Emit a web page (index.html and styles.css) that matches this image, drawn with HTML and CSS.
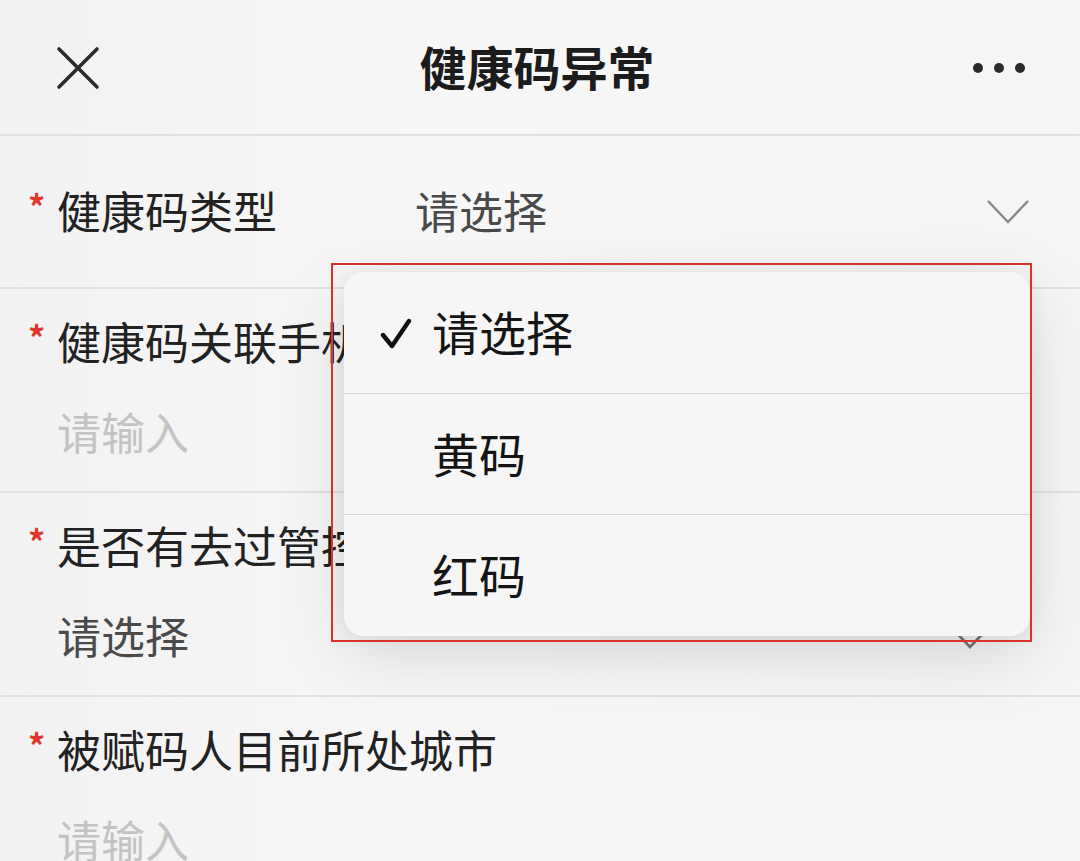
FILE: index.html
```html
<!DOCTYPE html>
<html lang="zh">
<head>
<meta charset="utf-8">
<link rel="stylesheet" href="styles.css">
</head>
<body>
<div class="page">
  <header class="topbar">
    <svg class="close" width="44" height="44" viewBox="0 0 44 44"><path d="M3 3 L41 41 M41 3 L3 41" stroke="#2b2b2b" stroke-width="3.6" stroke-linecap="round"/></svg>
    <div class="title">健康码异常</div>
    <svg class="more" width="54" height="14" viewBox="0 0 54 14"><circle cx="6" cy="7" r="5" fill="#2b2b2b"/><circle cx="27" cy="7" r="5" fill="#2b2b2b"/><circle cx="48" cy="7" r="5" fill="#2b2b2b"/></svg>
  </header>

  <section class="row row-inline">
    <div class="label"><span class="req">*</span>健康码类型</div>
    <div class="value select">请选择</div>
    <svg class="chev" width="44" height="26" viewBox="0 0 44 26"><path d="M2 2 L22 23 L42 2" fill="none" stroke="#888" stroke-width="2.4"/></svg>
  </section>

  <section class="row row-stack">
    <div class="label"><span class="req">*</span>健康码关联手机号</div>
    <div class="value placeholder">请输入</div>
  </section>

  <section class="row row-stack">
    <div class="label"><span class="req">*</span>是否有去过管控区域</div>
    <div class="value-line">
      <div class="value select">请选择</div>
      <svg class="chev" width="44" height="26" viewBox="0 0 44 26"><path d="M2 2 L22 23 L42 2" fill="none" stroke="#777" stroke-width="2.6"/></svg>
    </div>
  </section>

  <section class="row row-stack last">
    <div class="label"><span class="req">*</span>被赋码人目前所处城市</div>
    <div class="value placeholder">请输入</div>
  </section>

  <div class="highlight"></div>
  <div class="menu">
    <div class="item">
      <svg class="check" width="32" height="32" viewBox="0 0 32 32"><path d="M3 17 L12 28 L29 3" fill="none" stroke="#111" stroke-width="4.4" stroke-linejoin="round" stroke-linecap="round"/></svg>
      <span>请选择</span>
    </div>
    <div class="item"><span>黄码</span></div>
    <div class="item"><span>红码</span></div>
  </div>
</div>
</body>
</html>
```

FILE: styles.css
```css
* { box-sizing: border-box; }
html, body {
  margin: 0;
  padding: 0;
  width: 1080px;
  height: 861px;
  overflow: hidden;
  background: #f4f4f4;
  font-family: "Noto Sans CJK SC", "Noto Sans", sans-serif;
  color: #1f1f1f;
}
.page {
  position: relative;
  width: 1080px;
  height: 861px;
  overflow: hidden;
  background: linear-gradient(90deg, #f2f2f2 0%, #f7f7f7 40%, #f5f5f5 100%);
}
.topbar {
  height: 136px;
  display: flex;
  align-items: center;
  justify-content: space-between;
  padding: 6px 54px 0 56px;
  border-bottom: 2px solid #e0e0e0;
}
.close { display: block; margin-top: -4px; }
.title {
  font-size: 47px;
  font-weight: 700;
  color: #1c1c1c;
  margin-left: 2px;
  margin-top: -10px;
}
.more { display: block; margin-top: -4px; }

.row {
  border-bottom: 2px solid #e2e2e2;
  padding-left: 28px;
  padding-right: 50px;
}
.row.last { border-bottom: none; }
.row-inline {
  height: 153px;
  display: flex;
  align-items: center;
}
.row-inline .label { width: 387px; margin-top: -4px; }
.row-inline .value { flex: 1; margin-top: -4px; }

.row-stack {
  display: flex;
  flex-direction: column;
  padding-top: 24px;
  padding-bottom: 32px;
  gap: 34px;
}
.label {
  font-size: 44px;
  line-height: 56px;
  height: 56px;
  display: flex;
  align-items: flex-start;
  color: #222;
  white-space: nowrap;
}
.req {
  color: #e0362c;
  font-size: 34px;
  width: 29px;
  line-height: 40px;
  margin-top: 4px;
  font-weight: 700;
}
.value {
  font-size: 44px;
  line-height: 56px;
  height: 56px;
}
.row-stack .value { padding-left: 29px; }
.select { color: #4a4a4a; }
.placeholder { color: #c3c3c3; }
.value-line {
  display: flex;
  align-items: center;
  justify-content: space-between;
  padding-right: 38px;
}
.value-line .chev { margin-top: 4px; }

.highlight {
  position: absolute;
  left: 331px;
  top: 263px;
  width: 701px;
  height: 379px;
  border: 2px solid #d9342c;
  z-index: 3;
  pointer-events: none;
}
.menu {
  position: absolute;
  left: 344px;
  top: 272px;
  width: 686px;
  height: 364px;
  background: #f6f6f6;
  border-radius: 20px;
  box-shadow: 0 20px 70px rgba(0,0,0,0.13), 0 0 18px rgba(0,0,0,0.05);
  display: flex;
  flex-direction: column;
  z-index: 2;
}
.item {
  flex: 1;
  display: flex;
  align-items: center;
  padding-left: 88px;
  position: relative;
  font-size: 47px;
  color: #141414;
  border-bottom: 1.5px solid #d6d6d6;
}
.item:last-child { border-bottom: none; }
.item span { margin-top: -4px; }
.check {
  position: absolute;
  left: 36px;
  top: 46px;
}
```
